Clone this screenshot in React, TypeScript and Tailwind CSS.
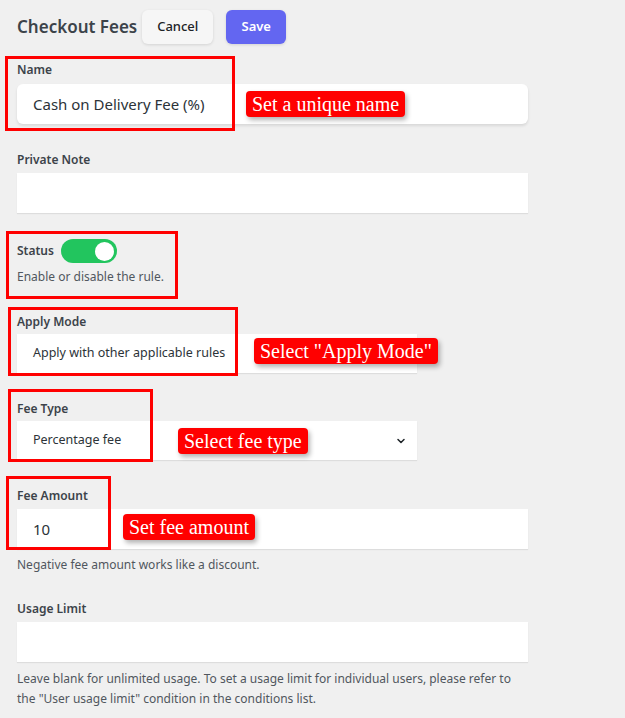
import React from 'react';

const font = { fontFamily: '"Segoe UI", "Noto Sans", "Open Sans", sans-serif' };

const Label: React.FC<{ children: React.ReactNode }> = ({ children }) => (
  <div className="text-[12px] font-semibold leading-4 text-[#3c434a]">{children}</div>
);

const Note: React.FC<{ text: string; className: string }> = ({ text, className }) => (
  <div
    className={`absolute rounded-[4px] bg-[#ff0000] px-[6px] text-[20px] leading-[26px] text-white shadow-[2px_3px_5px_rgba(0,0,0,0.3)] ${className}`}
    style={{ fontFamily: '"Liberation Serif", "Times New Roman", serif' }}
  >
    {text}
  </div>
);

const Box: React.FC<{ className: string }> = ({ className }) => (
  <div className={`pointer-events-none absolute border-[3px] border-[#ff0000] ${className}`} />
);

const App: React.FC = () => {
  return (
    <div className="relative h-[718px] w-[625px] overflow-hidden bg-[#f0f0f0] pl-[17px] text-[#2c3338]" style={font}>
      {/* Header */}
      <div className="flex items-center gap-[5px] pt-[10px]">
        <h1 className="text-[17px] font-semibold text-[#3c434a]">Checkout Fees</h1>
        <div className="flex gap-[13px]">
          <button className="h-[34px] w-[71px] rounded-[6px] bg-[#f6f6f6] text-[13px] font-medium text-[#1d2327] shadow-[0_1px_3px_rgba(0,0,0,0.12)]">
            Cancel
          </button>
          <button className="h-[34px] w-[60px] rounded-[6px] bg-[#6366f1] text-[13px] font-semibold text-white shadow-[0_1px_3px_rgba(0,0,0,0.12)]">
            Save
          </button>
        </div>
      </div>

      {/* Name */}
      <div className="mt-[18px]">
        <Label>Name</Label>
        <div className="mt-[6px] flex h-[40px] w-[511px] items-center rounded-[6px] bg-white pl-[16px] text-[15px] shadow-[0_2px_3px_rgba(0,0,0,0.1)]">
          Cash on Delivery Fee (%)
        </div>
      </div>

      {/* Private Note */}
      <div className="mt-[28px]">
        <Label>Private Note</Label>
        <div className="mt-[5px] h-[40px] w-[511px] bg-white shadow-[0_1px_1px_rgba(0,0,0,0.08)]" />
      </div>

      {/* Status */}
      <div className="mt-[26px]">
        <div className="flex items-center gap-[7px]">
          <Label>Status</Label>
          <div className="flex h-[24px] w-[56px] items-center justify-end rounded-full bg-[#22c55e] pr-[3px]">
            <div className="h-[19px] w-[19px] rounded-full bg-white" />
          </div>
        </div>
        <div className="mt-[6px] text-[12px] leading-4 text-[#50575e]">Enable or disable the rule.</div>
      </div>

      {/* Apply Mode */}
      <div className="mt-[29px]">
        <Label>Apply Mode</Label>
        <div className="mt-[4px] flex h-[39px] w-[400px] items-center bg-white pl-[16px] text-[12.5px] shadow-[0_1px_1px_rgba(0,0,0,0.08)]">
          Apply with other applicable rules
        </div>
      </div>

      {/* Fee Type */}
      <div className="mt-[28px]">
        <Label>Fee Type</Label>
        <div className="mt-[4px] flex h-[39px] w-[400px] items-center justify-between bg-white pl-[16px] pr-[10px] text-[12.5px] shadow-[0_1px_1px_rgba(0,0,0,0.08)]">
          <span>Percentage fee</span>
          <svg width="12" height="12" viewBox="0 0 24 24" fill="none" stroke="#1d2327" strokeWidth="3" strokeLinecap="round" strokeLinejoin="round">
            <path d="M6 9l6 6 6-6" />
          </svg>
        </div>
      </div>

      {/* Fee Amount */}
      <div className="mt-[28px]">
        <Label>Fee Amount</Label>
        <div className="mt-[5px] flex h-[40px] w-[511px] items-center bg-white pl-[16px] text-[15px] shadow-[0_1px_1px_rgba(0,0,0,0.08)]">
          10
        </div>
        <div className="mt-[8px] text-[12px] leading-4 text-[#50575e]">Negative fee amount works like a discount.</div>
      </div>

      {/* Usage Limit */}
      <div className="mt-[28px]">
        <Label>Usage Limit</Label>
        <div className="mt-[5px] h-[40px] w-[511px] bg-white shadow-[0_1px_1px_rgba(0,0,0,0.08)]" />
        <p className="mt-[7px] w-[511px] text-[12px] leading-5 text-[#50575e]">
          Leave blank for unlimited usage. To set a usage limit for individual users, please refer to the "User usage limit" condition in the conditions list.
        </p>
      </div>

      {/* Annotations */}
      <Box className="left-[5px] top-[56px] h-[75px] w-[230px]" />
      <Note text="Set a unique name" className="left-[246px] top-[91px]" />
      <Box className="left-[6px] top-[231px] h-[68px] w-[172px]" />
      <Box className="left-[8px] top-[307px] h-[69px] w-[230px]" />
      <Note text={'Select "Apply Mode"'} className="left-[254px] top-[338px]" />
      <Box className="left-[8px] top-[389px] h-[73px] w-[145px]" />
      <Note text="Select fee type" className="left-[178px] top-[428px]" />
      <Box className="left-[6px] top-[476px] h-[74px] w-[105px]" />
      <Note text="Set fee amount" className="left-[123px] top-[514px]" />
    </div>
  );
};

export default App;
